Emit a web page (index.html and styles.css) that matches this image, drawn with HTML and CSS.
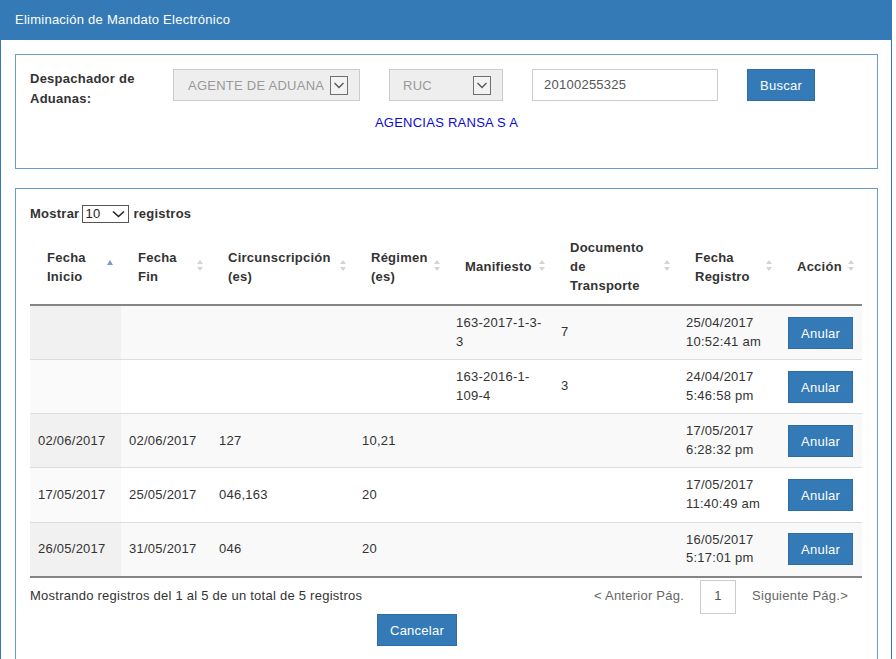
FILE: index.html
```html
<!DOCTYPE html>
<html lang="es">
<head>
<meta charset="utf-8">
<title>Eliminación de Mandato Electrónico</title>
<link rel="stylesheet" href="styles.css">
</head>
<body>
<div class="panel">
  <div class="panel-heading">Eliminación de Mandato Electrónico</div>
  <div class="panel-body">
    <div class="box box-search">
      <div class="form-row">
        <label class="lbl">Despachador de Aduanas:</label>
        <div class="fake-select sel-tipo">
          <span class="sel-text">AGENTE DE ADUANA</span>
          <span class="arrow-box"><svg width="16" height="16" viewBox="0 0 16 16"><polyline points="3.5,6 8,10.5 12.5,6" fill="none" stroke="#555" stroke-width="1.3"/></svg></span>
        </div>
        <div class="fake-select sel-doc">
          <span class="sel-text">RUC</span>
          <span class="arrow-box"><svg width="16" height="16" viewBox="0 0 16 16"><polyline points="3.5,6 8,10.5 12.5,6" fill="none" stroke="#555" stroke-width="1.3"/></svg></span>
        </div>
        <div class="text-input">20100255325</div>
        <button class="btn">Buscar</button>
      </div>
      <div class="agency">AGENCIAS RANSA S A</div>
    </div>

    <div class="box box-results">
      <div class="length">
        <span>Mostrar</span>
        <span class="len-select"><span>10</span><svg width="13" height="8" viewBox="0 0 13 8"><polyline points="1,1.5 6.5,6.5 12,1.5" fill="none" stroke="#222" stroke-width="1.6"/></svg></span>
        <span>registros</span>
      </div>

      <table class="grid">
        <colgroup>
          <col class="c1"><col class="c2"><col class="c3"><col class="c4"><col class="c5"><col class="c6"><col class="c7"><col class="c8">
        </colgroup>
        <thead>
          <tr>
            <th class="sort-asc">Fecha<br>Inicio</th>
            <th class="sort-both">Fecha<br>Fin</th>
            <th class="sort-both">Circunscripción<br>(es)</th>
            <th class="sort-both">Régimen<br>(es)</th>
            <th class="sort-both">Manifiesto</th>
            <th class="sort-both">Documento<br>de<br>Transporte</th>
            <th class="sort-both">Fecha<br>Registro</th>
            <th class="sort-both">Acción</th>
          </tr>
        </thead>
        <tbody>
          <tr>
            <td class="sorted"></td><td></td><td></td><td></td>
            <td>163-2017-1-3-<br>3</td><td>7</td><td>25/04/2017<br>10:52:41 am</td>
            <td><button class="btn">Anular</button></td>
          </tr>
          <tr>
            <td class="sorted"></td><td></td><td></td><td></td>
            <td>163-2016-1-<br>109-4</td><td>3</td><td>24/04/2017<br>5:46:58 pm</td>
            <td><button class="btn">Anular</button></td>
          </tr>
          <tr>
            <td class="sorted">02/06/2017</td><td>02/06/2017</td><td>127</td><td>10,21</td>
            <td></td><td></td><td>17/05/2017<br>6:28:32 pm</td>
            <td><button class="btn">Anular</button></td>
          </tr>
          <tr>
            <td class="sorted">17/05/2017</td><td>25/05/2017</td><td>046,163</td><td>20</td>
            <td></td><td></td><td>17/05/2017<br>11:40:49 am</td>
            <td><button class="btn">Anular</button></td>
          </tr>
          <tr>
            <td class="sorted">26/05/2017</td><td>31/05/2017</td><td>046</td><td>20</td>
            <td></td><td></td><td>16/05/2017<br>5:17:01 pm</td>
            <td><button class="btn">Anular</button></td>
          </tr>
        </tbody>
      </table>

      <div class="table-foot">
        <div class="info">Mostrando registros del 1 al 5 de un total de 5 registros</div>
        <div class="pager">
          <span class="pg-link">&lt; Anterior Pág.</span>
          <span class="pg-num">1</span>
          <span class="pg-link">Siguiente Pág.&gt;</span>
        </div>
      </div>
      <div class="actions">
        <button class="btn">Cancelar</button>
      </div>
    </div>
  </div>
</div>
</body>
</html>
```

FILE: styles.css
```css
* { box-sizing: border-box; }

html, body {
  margin: 0;
  padding: 0;
  background: #ffffff;
}

body {
  font-family: "Liberation Sans", Arial, Helvetica, sans-serif;
  font-size: 13px;
  line-height: 1.42857;
  letter-spacing: 0.25px;
  color: #333333;
}

.panel {
  width: 892px;
  height: 720px;
  border: 1px solid #337ab7;
  border-top: 0;
  overflow: hidden;
}

.panel-heading {
  height: 40px;
  padding: 10px 14px 0 14px;
  line-height: 19px;
  background: #337ab7;
  color: #ffffff;
}

.panel-body {
  padding: 14px 13px 14px 14px;
}

.box {
  border: 1px solid #6a9bcf;
  background: #ffffff;
}

.box-search {
  padding: 14px 14px 36px 14px;
}

.form-row {
  display: flex;
  align-items: flex-start;
}

.lbl {
  width: 143px;
  padding-right: 20px;
  font-weight: bold;
  line-height: 20px;
  margin-top: 0;
}

.fake-select {
  height: 32px;
  padding-top: 2px;
  display: flex;
  align-items: center;
  justify-content: space-between;
  background: #eeeeee;
  border: 1px solid #cccccc;
  color: #999999;
}

.fake-select .arrow-box {
  margin-top: -2px;
}

.sel-tipo {
  width: 187px;
  padding-left: 14px;
  padding-right: 11px;
  margin-right: 29px;
}

.sel-doc {
  width: 114px;
  padding-left: 13px;
  padding-right: 11px;
  margin-right: 29px;
}

.arrow-box {
  width: 18px;
  height: 19px;
  border: 1px solid #707070;
  background: #f3f3f3;
  display: flex;
  align-items: center;
  justify-content: center;
}

.arrow-box svg { display: block; }

.text-input {
  width: 186px;
  height: 32px;
  padding: 1px 11px 0 11px;
  display: flex;
  align-items: center;
  border: 1px solid #cccccc;
  background: #ffffff;
  color: #555555;
  margin-right: 29px;
}

.btn {
  font-family: inherit;
  font-size: 13px;
  letter-spacing: 0.25px;
  line-height: 18.57px;
  padding: 7px 12px 5px 12px;
  height: 32px;
  background: #337ab7;
  border: 1px solid #2e6da4;
  color: #ffffff;
  border-radius: 0;
  cursor: pointer;
}

.agency {
  margin-top: 4px;
  text-align: center;
  line-height: 19px;
  color: #0a0ad2;
}

.box-results {
  margin-top: 19px;
  height: 620px;
  padding: 16px 14px 0 14px;
}

.length {
  display: flex;
  align-items: center;
  height: 18px;
  font-weight: bold;
}

.len-select {
  width: 47px;
  height: 18px;
  margin: 0 4px 0 3px;
  padding: 0 3px 0 2px;
  border: 1px solid #555555;
  background: #ffffff;
  display: flex;
  align-items: center;
  justify-content: space-between;
  font-weight: normal;
  color: #222222;
}

.len-select svg { display: block; }

.grid {
  margin-top: 7px;
  width: 832px;
  table-layout: fixed;
  border-collapse: collapse;
  border-spacing: 0;
  border-bottom: 2px solid #858585;
}

.c1 { width: 91px; }
.c2 { width: 90px; }
.c3 { width: 143px; }
.c4 { width: 94px; }
.c5 { width: 105px; }
.c6 { width: 125px; }
.c7 { width: 102px; }
.c8 { width: 82px; }

.grid th {
  position: relative;
  text-align: left;
  vertical-align: middle;
  font-weight: bold;
  line-height: 19px;
  padding: 8px 18px 9px 17px;
  border-bottom: 2px solid #858585;
}

.grid th::before,
.grid th::after {
  content: "";
  position: absolute;
  right: 8px;
  width: 0;
  height: 0;
  border-left: 3px solid transparent;
  border-right: 3px solid transparent;
}

.grid th.sort-both::before {
  top: calc(50% - 7px);
  border-bottom: 4px solid #d4d4d4;
}

.grid th.sort-both::after {
  top: calc(50% + 0px);
  border-top: 4px solid #d4d4d4;
}

.grid th.sort-asc::before {
  top: calc(50% - 7px);
  border-left-width: 3.5px;
  border-right-width: 3.5px;
  border-bottom: 5px solid #7f95d6;
}

.grid th.sort-asc::after {
  display: none;
}

.grid td {
  vertical-align: middle;
  padding: 8px 8px;
  line-height: 1.42857;
  background: #ffffff;
}

.grid tbody tr + tr td {
  border-top: 1px solid #dddddd;
}

.grid tbody tr:nth-child(odd) td { background: #f9f9f9; }
.grid tbody tr:nth-child(odd) td.sorted { background: #f1f1f1; }
.grid tbody tr:nth-child(even) td.sorted { background: #fafafa; }

.table-foot {
  margin-top: 2px;
  display: flex;
  align-items: center;
  justify-content: space-between;
  padding-right: 15px;
  height: 34px;
}

.pager {
  display: flex;
  align-items: center;
}

.pg-link {
  color: #666666;
}

.pg-num {
  width: 36px;
  height: 34px;
  margin: 0 16px;
  border: 1px solid #cccccc;
  display: flex;
  align-items: center;
  justify-content: center;
  color: #555555;
}

.actions {
  padding-left: 347px;
}
```
